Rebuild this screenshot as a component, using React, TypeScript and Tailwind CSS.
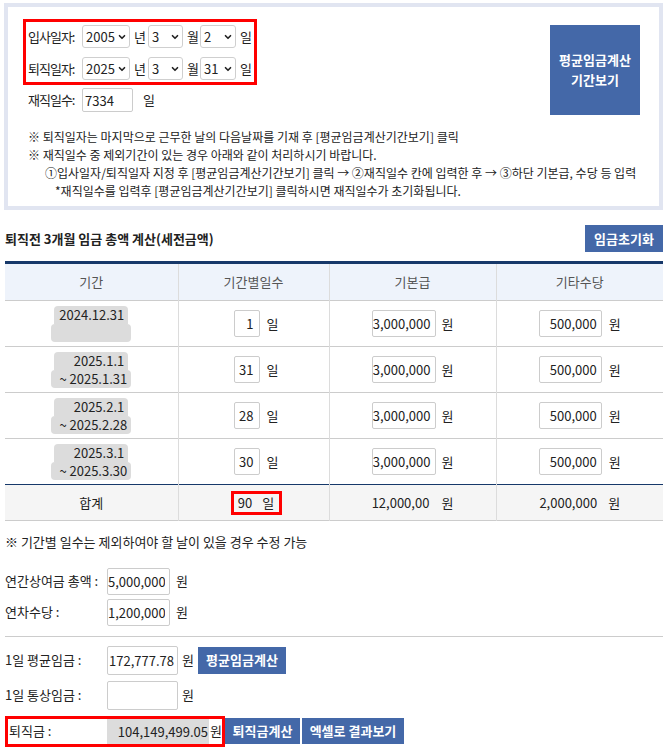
import { ChevronDown } from "lucide-react";

const rows = [
  { from: "2024.12.31", to: "", days: "1" },
  { from: "2025.1.1", to: "~ 2025.1.31", days: "31" },
  { from: "2025.2.1", to: "~ 2025.2.28", days: "28" },
  { from: "2025.3.1", to: "~ 2025.3.30", days: "30" },
];

function DateSelect({ value, className }: { value: string; className: string }) {
  return (
    <div className={`relative ${className}`}>
      <select
        defaultValue={value}
        className="h-[23px] w-full appearance-none rounded-[3px] border border-[#cfcfcf] bg-white pl-[3px] text-[13px] leading-[21px] outline-none"
      >
        <option>{value}</option>
      </select>
      <ChevronDown className="pointer-events-none absolute right-[3px] top-[7px] size-[10px]" strokeWidth={4} />
    </div>
  );
}

function Box({ value, className }: { value: string; className: string }) {
  return (
    <input
      readOnly
      value={value}
      className={`rounded-[2px] border border-[#cccccc] bg-white text-right text-[13px] outline-none ${className}`}
    />
  );
}

function BlueButton({ children, className }: { children: React.ReactNode; className: string }) {
  return (
    <button className={`bg-[#4468a8] text-[13px] font-bold text-white ${className}`}>{children}</button>
  );
}

export default function App() {
  return (
    <div className="w-[671px] bg-white pt-[3px] font-['Noto_Sans_CJK_KR','Noto_Sans',sans-serif] text-[13px] text-[#222]">
      {/* date range box */}
      <div className="ml-[4px] w-[659px] h-[207px] border-[4px] border-[#e1e5f1] bg-white">
        <div className="flex justify-between pt-[12px] pl-[15px] pr-[19px]">
          <div>
            <div className="w-[234px] h-[66px] border-[3px] border-[#ff0000] pl-[2px] pt-[3px] flex flex-col gap-[9px]">
              <div className="flex items-center h-[23px] text-[13px]">
                <span className="w-[54px] whitespace-nowrap tracking-[-1px]">입사일자:</span>
                <DateSelect value="2005" className="w-[48px]" />
                <span className="w-[18px] pl-[4px]">년</span>
                <DateSelect value="3" className="w-[35px]" />
                <span className="w-[17px] pl-[4px]">월</span>
                <DateSelect value="2" className="w-[36px]" />
                <span className="pl-[4px]">일</span>
              </div>
              <div className="flex items-center h-[23px] text-[13px]">
                <span className="w-[54px] whitespace-nowrap tracking-[-1px]">퇴직일자:</span>
                <DateSelect value="2025" className="w-[48px]" />
                <span className="w-[18px] pl-[4px]">년</span>
                <DateSelect value="3" className="w-[35px]" />
                <span className="w-[17px] pl-[4px]">월</span>
                <DateSelect value="31" className="w-[36px]" />
                <span className="pl-[4px]">일</span>
              </div>
            </div>
            <div className="flex items-center mt-[3px] pl-[5px] text-[13px]">
              <span className="w-[54px] whitespace-nowrap tracking-[-1px]">재직일수:</span>
              <input
                readOnly
                value="7334"
                className="h-[24px] w-[51px] rounded-[2px] border border-[#cccccc] pl-[2px] text-[13px] outline-none"
              />
              <span className="pl-[10px]">일</span>
            </div>
          </div>
          <BlueButton className="mt-[6px] w-[90px] h-[90px] leading-[20px]">
            평균임금계산
            <br />
            기간보기
          </BlueButton>
        </div>
        <div className="mt-[13px] pl-[20px] text-[12px] leading-[18px]">
          <p>※ 퇴직일자는 마지막으로 근무한 날의 다음날짜를 기재 후 [평균임금계산기간보기] 클릭</p>
          <p>※ 재직일수 중 제외기간이 있는 경우 아래와 같이 처리하시기 바랍니다.</p>
          <p className="pl-[17px] whitespace-nowrap">
            ①입사일자/퇴직일자 지정 후 [평균임금계산기간보기] 클릭 → ②재직일수 칸에 입력한 후 → ③하단 기본급, 수당 등 입력
          </p>
          <p className="pl-[27px]">*재직일수를 입력후 [평균임금계산기간보기] 클릭하시면 재직일수가 초기화됩니다.</p>
        </div>
      </div>

      {/* 3 months wage table */}
      <div className="px-[5px] mr-[3px]">
        <div className="flex items-center justify-between mt-[15px] mb-[9px] h-[27px]">
          <h2 className="font-bold text-[13px]">퇴직전 3개월 임금 총액 계산(세전금액)</h2>
          <BlueButton className="w-[78px] h-[27px]">임금초기화</BlueButton>
        </div>
        <table className="w-[658px] border-collapse table-fixed border-t-[3px] border-t-[#16386a]">
          <colgroup>
            <col className="w-[173px]" />
            <col className="w-[151px]" />
            <col className="w-[167px]" />
            <col className="w-[167px]" />
          </colgroup>
          <thead>
            <tr className="h-[38px] bg-[#eef3fb] text-[#555]">
              <th className="font-normal border-r border-[#dcdcdc]">기간</th>
              <th className="font-normal border-r border-[#dcdcdc]">기간별일수</th>
              <th className="font-normal border-r border-[#dcdcdc]">기본급</th>
              <th className="font-normal">기타수당</th>
            </tr>
          </thead>
          <tbody>
            {rows.map((r, i) => (
              <tr key={i} className="h-[46px] border-t border-[#cccccc]">
                <td className="border-r border-[#dcdcdc]">
                  <div className="flex flex-col items-center">
                    <div className="w-[74px] h-[18px] rounded-t-[4px] bg-[#dcdcdc] pr-[4px] text-right leading-[18px] text-[13px]">
                      {r.from}
                    </div>
                    <div className="w-[80px] h-[18px] rounded-[4px] bg-[#dcdcdc] pr-[4px] text-right leading-[18px] text-[13px]">
                      {r.to}
                    </div>
                  </div>
                </td>
                <td className="border-r border-[#dcdcdc]">
                  <div className="flex items-center justify-center gap-[7px] pl-[5px]">
                    <Box value={r.days} className="w-[26px] h-[27px] pr-[5px]" />
                    <span>일</span>
                  </div>
                </td>
                <td className="border-r border-[#dcdcdc]">
                  <div className="flex items-center justify-center gap-[6px]">
                    <Box value="3,000,000" className="w-[64px] h-[27px] pr-[4px]" />
                    <span>원</span>
                  </div>
                </td>
                <td>
                  <div className="flex items-center justify-center gap-[7px]">
                    <Box value="500,000" className="w-[63px] h-[27px] pr-[4px]" />
                    <span>원</span>
                  </div>
                </td>
              </tr>
            ))}
            <tr className="h-[36px] bg-[#f5f5f5] border-t border-t-[#16386a] border-b border-b-[#cccccc]">
              <td className="border-r border-[#dcdcdc] text-center">합계</td>
              <td className="border-r border-[#dcdcdc]">
                <div className="flex justify-center pl-[5px]">
                  <div className="w-[51px] h-[24px] border-[3px] border-[#ff0000] flex items-center justify-center gap-[10px] leading-none">
                    <span>90</span>
                    <span>일</span>
                  </div>
                </div>
              </td>
              <td className="border-r border-[#dcdcdc]">
                <div className="flex justify-center gap-[12px]">
                  <span>12,000,00</span>
                  <span>원</span>
                </div>
              </td>
              <td>
                <div className="flex justify-center gap-[11px]">
                  <span>2,000,000</span>
                  <span>원</span>
                </div>
              </td>
            </tr>
          </tbody>
        </table>
        <p className="mt-[11px]">※ 기간별 일수는 제외하여야 할 날이 있을 경우 수정 가능</p>

        {/* bonus & allowance */}
        <div className="mt-[16px] flex flex-col gap-[4px]">
          <div className="flex items-center">
            <span className="w-[102px]">연간상여금 총액 :</span>
            <Box value="5,000,000" className="w-[63px] h-[27px] pr-[4px]" />
            <span className="pl-[6px]">원</span>
          </div>
          <div className="flex items-center">
            <span className="w-[102px]">연차수당 :</span>
            <Box value="1,200,000" className="w-[63px] h-[27px] pr-[4px]" />
            <span className="pl-[6px]">원</span>
          </div>
        </div>
        <div className="mt-[10px] border-t border-[#cccccc]" />

        {/* results */}
        <div className="mt-[9px] flex flex-col gap-[6px]">
          <div className="flex items-center">
            <span className="w-[102px]">1일 평균임금 :</span>
            <Box value="172,777.78" className="w-[71px] h-[29px] pr-[3px]" />
            <span className="pl-[4px] pr-[4px]">원</span>
            <BlueButton className="w-[88px] h-[27px]">평균임금계산</BlueButton>
          </div>
          <div className="flex items-center">
            <span className="w-[102px]">1일 통상임금 :</span>
            <Box value="" className="w-[71px] h-[29px] pr-[3px]" />
            <span className="pl-[4px]">원</span>
          </div>
          <div className="flex items-center">
            <div className="w-[220px] h-[31px] border-[3px] border-[#ff0000] flex items-center">
              <span className="w-[99px] pl-[1px]">퇴직금 :</span>
              <div className="w-[102px] h-[25px] bg-[#dcdcdc] pr-[1px] text-right leading-[25px]">104,149,499.05</div>
              <span className="pl-[1px]">원</span>
            </div>
            <BlueButton className="ml-[0px] w-[75px] h-[26px]">퇴직금계산</BlueButton>
            <BlueButton className="ml-[2px] w-[102px] h-[26px]">엑셀로 결과보기</BlueButton>
          </div>
        </div>
      </div>
    </div>
  );
}
